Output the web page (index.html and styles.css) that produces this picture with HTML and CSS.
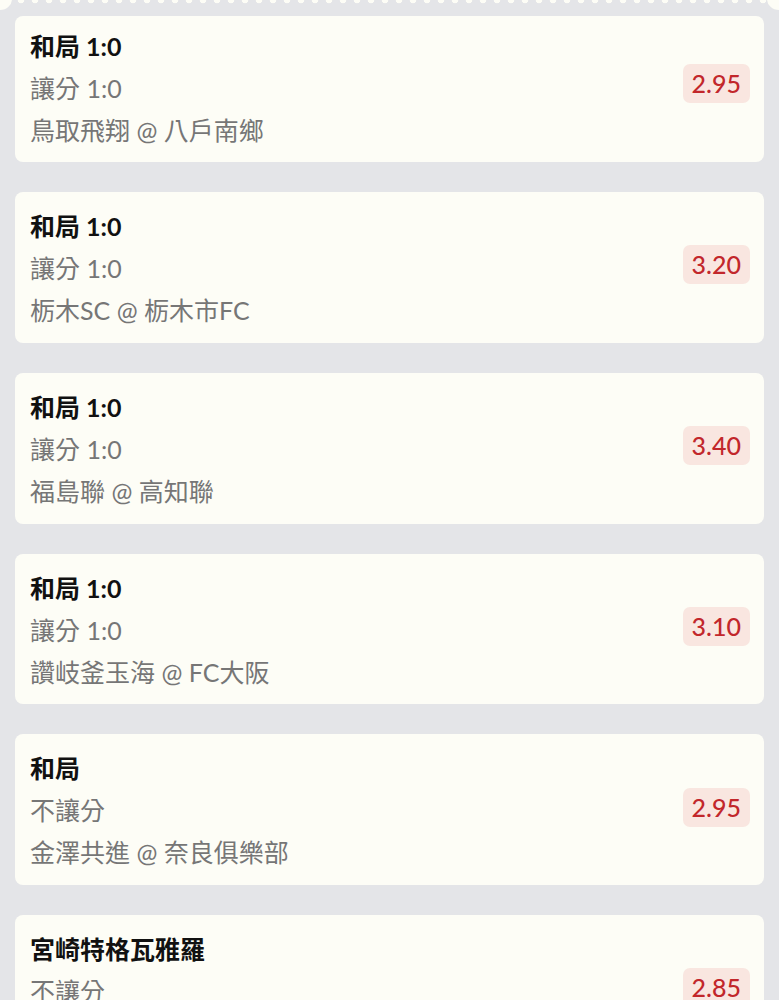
FILE: index.html
```html
<!DOCTYPE html>
<html lang="zh-Hant">
<head>
  <meta charset="UTF-8">
  <meta name="viewport" content="width=device-width, initial-scale=1.0">
  <title>投注選項</title>
  <link rel="stylesheet" href="styles.css">
</head>
<body>
  <!-- bottom edge of the ticket above -->
  <div class="ticket-edge"></div>

  <div class="bet-list">
    <div class="bet-card cut">
      <div class="bet-info">
        <div class="bet-title">和局 1:0</div>
        <div class="bet-line">讓分 1:0</div>
        <div class="bet-line">鳥取飛翔 @ 八戶南鄉</div>
      </div>
      <div class="odds">2.95</div>
    </div>

    <div class="bet-card">
      <div class="bet-info">
        <div class="bet-title">和局 1:0</div>
        <div class="bet-line">讓分 1:0</div>
        <div class="bet-line">栃木SC @ 栃木市FC</div>
      </div>
      <div class="odds">3.20</div>
    </div>

    <div class="bet-card">
      <div class="bet-info">
        <div class="bet-title">和局 1:0</div>
        <div class="bet-line">讓分 1:0</div>
        <div class="bet-line">福島聯 @ 高知聯</div>
      </div>
      <div class="odds">3.40</div>
    </div>

    <div class="bet-card">
      <div class="bet-info">
        <div class="bet-title">和局 1:0</div>
        <div class="bet-line">讓分 1:0</div>
        <div class="bet-line">讚岐釜玉海 @ FC大阪</div>
      </div>
      <div class="odds">3.10</div>
    </div>

    <div class="bet-card">
      <div class="bet-info">
        <div class="bet-title">和局</div>
        <div class="bet-line">不讓分</div>
        <div class="bet-line">金澤共進 @ 奈良俱樂部</div>
      </div>
      <div class="odds">2.95</div>
    </div>

    <div class="bet-card">
      <div class="bet-info">
        <div class="bet-title">宮崎特格瓦雅羅</div>
        <div class="bet-line">不讓分</div>
        <div class="bet-line">宮崎特格瓦雅羅 @ 長野帕塞羅</div>
      </div>
      <div class="odds">2.85</div>
    </div>
  </div>
</body>
</html>
```

FILE: styles.css
```css
body {
  margin: 0;
  background-color: #e4e5e8;
  font-family: Lato, "Noto Sans CJK TC", sans-serif;
  overflow: hidden;
}

.ticket-edge {
  position: relative;
  height: 4px;
  background-image: radial-gradient(circle at 7px 0, #fdfdf6 3px, transparent 3.6px);
  background-size: 14px 4px;
  background-repeat: repeat-x;
}

.ticket-edge::before,
.ticket-edge::after {
  content: "";
  position: absolute;
  top: -12px;
  width: 24px;
  height: 22px;
  border-radius: 50%;
  background: #fdfdf6;
}

.ticket-edge::before {
  left: -12px;
}

.ticket-edge::after {
  right: -12px;
}

.bet-list {
  display: flex;
  flex-direction: column;
  gap: 30px;
  padding: 12px 15px 0;
}

.bet-card {
  display: flex;
  justify-content: space-between;
  align-items: center;
  height: 150.75px;
  box-sizing: border-box;
  padding: 0 14px 0 15px;
  background-color: #fdfdf6;
  border-radius: 8px;
  flex-shrink: 0;
}

.bet-info {
  align-self: flex-start;
  padding-top: 13px;
}

.bet-title,
.bet-line {
  font-size: 25px;
  line-height: 42px;
  white-space: nowrap;
}

.bet-title {
  font-weight: 700;
  color: #111;
}

.bet-line {
  color: #767676;
}

.odds {
  margin-bottom: 5px;
  padding: 0 9px;
  height: 39px;
  line-height: 39px;
  background-color: #f9e6e0;
  color: #c2272b;
  font-size: 25px;
  font-weight: 500;
  border-radius: 7px;
}

/* first card is partly scrolled under the ticket above */
.bet-card.cut {
  height: 146px;
}

.bet-card.cut .bet-info {
  padding-top: 9px;
}

.bet-card.cut .odds {
  margin-bottom: 11px;
}
```
